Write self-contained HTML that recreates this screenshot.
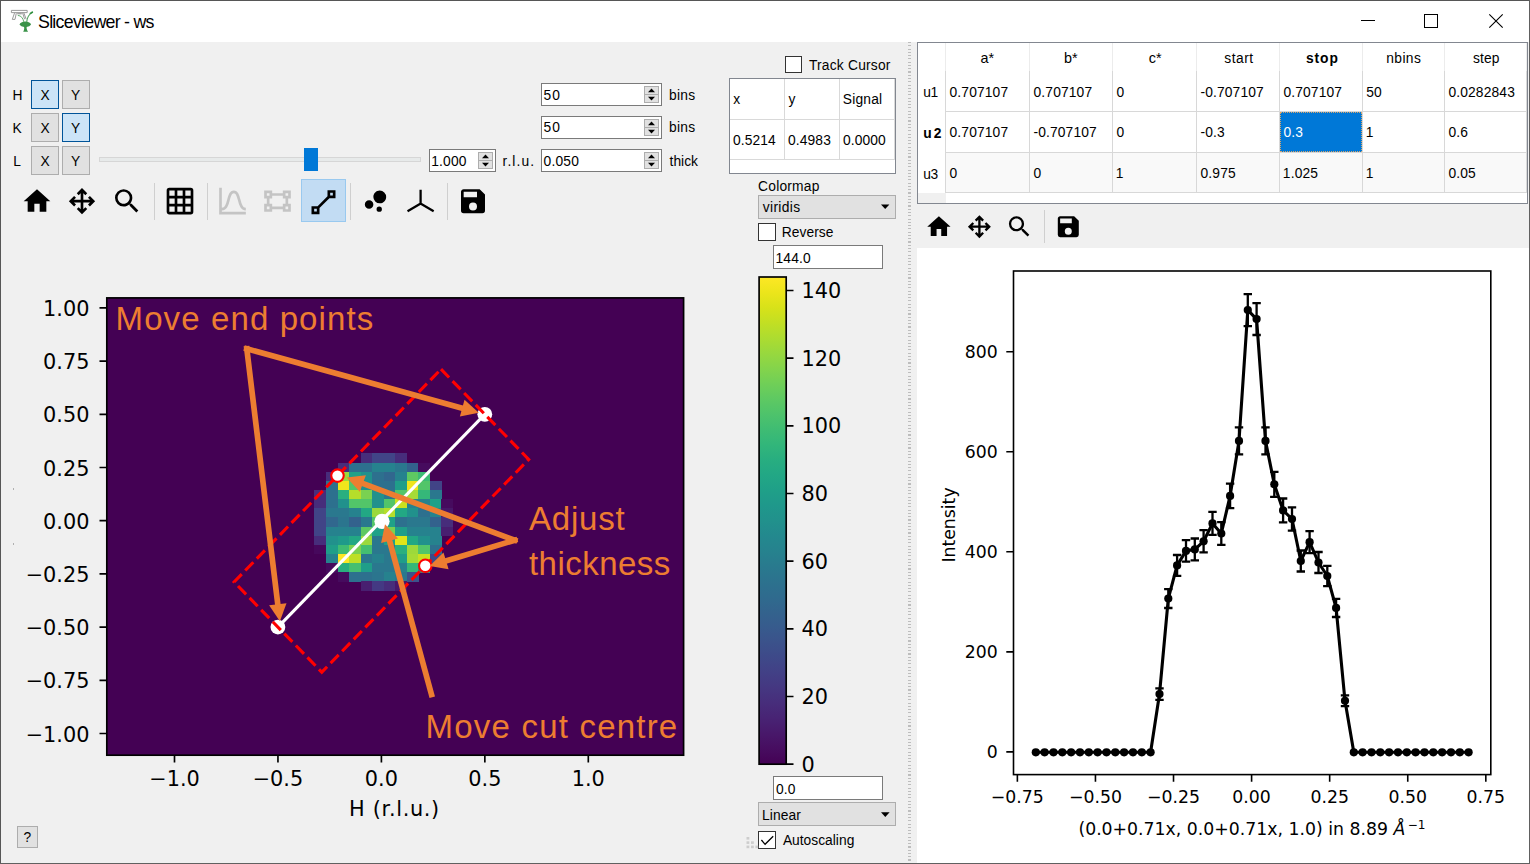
<!DOCTYPE html>
<html lang="en"><head><meta charset="utf-8"><title>Sliceviewer - ws</title>
<style>
html,body{margin:0;padding:0;background:#f0f0f0;}
body{width:1530px;height:864px;overflow:hidden;position:relative;font-family:"Liberation Sans",Arial,sans-serif;font-size:13.8px;color:#000;}
#win{position:absolute;left:0;top:0;width:1530px;height:864px;overflow:hidden;background:#f0f0f0;}
#win div{position:absolute;box-sizing:border-box;}
svg{position:absolute;left:0;top:0;overflow:visible;}
text{white-space:pre;}
.btn{background:#e1e1e1;border:1px solid #adadad;}
.btn.on{background:#cce4f7;border:1px solid #005499;}
.edit{background:#fff;border:1px solid #7a7a7a;}
.chk{background:#fff;border:1px solid #333;}
.sep{background:#cfcfcf;width:1px;}
</style></head><body>
<div id="win">

<div id="titlebar" style="left:1px;top:1px;width:1528px;height:41px;background:#fff;"></div>
<div id="dims">
<div class="btn on" style="left:31px;top:80px;width:28px;height:29px;"></div>
<div class="btn" style="left:62px;top:80px;width:28px;height:29px;"></div>
<div class="btn" style="left:31px;top:113px;width:28px;height:29px;"></div>
<div class="btn on" style="left:62px;top:113px;width:28px;height:29px;"></div>
<div class="btn" style="left:31px;top:146px;width:28px;height:29px;"></div>
<div class="btn" style="left:62px;top:146px;width:28px;height:29px;"></div>
<div style="left:99px;top:157px;width:322px;height:5px;background:#e7eaea;border:1px solid #d6d6d6;"></div>
<div style="left:304px;top:148px;width:14px;height:23px;background:#0078d7;"></div>
<div class="edit" style="left:541px;top:83px;width:121px;height:23px;"></div><div style="left:644px;top:86px;width:15px;height:17px;background:#e1e1e1;border:1px solid #adadad;"></div>
<div class="edit" style="left:541px;top:116px;width:121px;height:23px;"></div><div style="left:644px;top:119px;width:15px;height:17px;background:#e1e1e1;border:1px solid #adadad;"></div>
<div class="edit" style="left:541px;top:149px;width:121px;height:23px;"></div><div style="left:644px;top:152px;width:15px;height:17px;background:#e1e1e1;border:1px solid #adadad;"></div>
<div class="edit" style="left:428.5px;top:149px;width:67.5px;height:23px;"></div><div style="left:478.0px;top:152px;width:15px;height:17px;background:#e1e1e1;border:1px solid #adadad;"></div>
</div>
<div id="toolbar">
<div style="left:301px;top:179px;width:45px;height:43px;background:#c2dcf3;border:1px solid #99c9ef;"></div>
<div class="sep" style="left:154px;top:183px;width:1px;height:37px;"></div>
<div class="sep" style="left:207px;top:183px;width:1px;height:37px;"></div>
<div class="sep" style="left:350px;top:183px;width:1px;height:37px;"></div>
<div class="sep" style="left:447px;top:183px;width:1px;height:37px;"></div>
</div>
<div id="cursorinfo">
<div class="chk" style="left:785px;top:56px;width:17px;height:17px;"></div>
<div style="left:729px;top:78px;width:167px;height:96px;background:#fff;border:1px solid #828790;"></div>
<div style="left:784px;top:79px;width:1px;height:81px;background:#d9d9d9;"></div>
<div style="left:839px;top:79px;width:1px;height:81px;background:#d9d9d9;"></div>
<div style="left:894px;top:79px;width:1px;height:81px;background:#d9d9d9;"></div>
<div style="left:730px;top:119px;width:165px;height:1px;background:#d9d9d9;"></div>
<div style="left:730px;top:159px;width:165px;height:1px;background:#d9d9d9;"></div>
</div>
<div id="colorbar">
<div class="btn" style="left:758px;top:195px;width:138px;height:24px;"></div>
<div class="chk" style="left:758px;top:223px;width:18px;height:18px;"></div>
<div class="edit" style="left:772.5px;top:245px;width:110.5px;height:24px;"></div>
<div class="edit" style="left:772.5px;top:776px;width:110.5px;height:24px;"></div>
<div class="btn" style="left:758px;top:802px;width:138px;height:24px;"></div>
<div class="chk" style="left:758px;top:831px;width:18px;height:18px;"></div>
</div>
<div class="btn" style="left:17px;top:826px;width:21px;height:22px;"></div>
<div style="left:13px;top:488px;width:1px;height:2px;background:#b0b0b0;"></div>
<div style="left:13px;top:543px;width:1px;height:2px;background:#b0b0b0;"></div>
<div id="splitter" style="left:908px;top:42px;width:3px;height:820px;background:repeating-linear-gradient(to bottom,#bdbdbd 0,#bdbdbd 1.1px,#f0f0f0 1.1px,#f0f0f0 3.27px);"></div>
<div id="cuttable">
<div style="left:917px;top:42px;width:611px;height:162px;background:#fff;border:1px solid #828790;"></div>
<div style="left:946px;top:153px;width:581px;height:39px;background:#f9f9f9;"></div>
<div style="left:1280px;top:112px;width:82px;height:40px;background:#0078d7;outline:1px dotted #d9a66b;outline-offset:-1px;"></div>
<div style="left:945px;top:43px;width:1px;height:28px;background:#ececec;"></div>
<div style="left:945px;top:71px;width:1px;height:122px;background:#d8d8d8;"></div>
<div style="left:1029px;top:43px;width:1px;height:28px;background:#ececec;"></div>
<div style="left:1029px;top:71px;width:1px;height:122px;background:#d8d8d8;"></div>
<div style="left:1112px;top:43px;width:1px;height:28px;background:#ececec;"></div>
<div style="left:1112px;top:71px;width:1px;height:122px;background:#d8d8d8;"></div>
<div style="left:1196px;top:43px;width:1px;height:28px;background:#ececec;"></div>
<div style="left:1196px;top:71px;width:1px;height:122px;background:#d8d8d8;"></div>
<div style="left:1279px;top:43px;width:1px;height:28px;background:#ececec;"></div>
<div style="left:1279px;top:71px;width:1px;height:122px;background:#d8d8d8;"></div>
<div style="left:1362px;top:43px;width:1px;height:28px;background:#ececec;"></div>
<div style="left:1362px;top:71px;width:1px;height:122px;background:#d8d8d8;"></div>
<div style="left:1444px;top:43px;width:1px;height:28px;background:#ececec;"></div>
<div style="left:1444px;top:71px;width:1px;height:122px;background:#d8d8d8;"></div>
<div style="left:1526px;top:43px;width:1px;height:28px;background:#ececec;"></div>
<div style="left:1526px;top:71px;width:1px;height:122px;background:#d8d8d8;"></div>
<div style="left:946px;top:111px;width:581px;height:1px;background:#d8d8d8;"></div>
<div style="left:946px;top:152px;width:581px;height:1px;background:#d8d8d8;"></div>
<div style="left:946px;top:192px;width:581px;height:1px;background:#d8d8d8;"></div>
<div style="left:918px;top:193px;width:28px;height:10px;background:#f0f0f0;"></div>
</div>
<div class="sep" style="left:1044px;top:210px;width:1px;height:33px;"></div>
<div id="cutplot" style="left:917px;top:248px;width:612px;height:615px;background:#fff;"></div>
<svg id="gfx" width="1530" height="864" viewBox="0 0 1530 864">
<g id="title">
<g id="logo" fill="none">
<path d="M11.4,10.4H27.2V12.6H11.4Z" stroke="#8e8e8e" stroke-width="0.9" fill="#fff"/>
<path d="M14.6,12.8L12.3,19.4H15L16.3,13.2M22.6,12.8L24.6,19.2M23.8,12.8L26.2,19.2" stroke="#8e8e8e" stroke-width="0.9"/>
<path d="M17.2,13.4H21.8" stroke="#a2a2a2" stroke-width="1.9"/>
<path d="M17.8,15.4C21.2,15.6 23,18.2 23.8,21.8" stroke="#5aa866" stroke-width="0.95"/>
<path d="M26.8,21.4C27.2,17.4 29.4,14.2 32.3,12.4" stroke="#4ba159" stroke-width="1.1" stroke-linecap="round"/>
<path d="M30.4,13.4L32.3,12.2" stroke="#2f8f3f" stroke-width="1.7" stroke-linecap="round"/>
<ellipse cx="25.3" cy="24.3" rx="5.5" ry="2.7" fill="#3a9349"/>
<path d="M23.6,26C24.6,27.4 24.4,29.6 23.2,31.8H28.1C26.6,29.6 26.2,27.4 27,26Z" fill="#3a9349"/>
</g>
<text x="38.00" y="27.70" font-family="&quot;Liberation Sans&quot;,Arial,sans-serif" font-size="17.8" fill="#000" letter-spacing="-0.733">Sliceviewer - ws</text>
<path d="M1361,20.5H1375" stroke="#000" stroke-width="1"/>
<rect x="1424.5" y="14.5" width="13" height="13" fill="none" stroke="#000" stroke-width="1"/>
<path d="M1489.3,14.3L1502.7,27.7M1502.7,14.3L1489.3,27.7" stroke="#000" stroke-width="1.1"/>
</g>
<g id="dimtext">
<text x="12.50" y="99.90" font-family="&quot;Liberation Sans&quot;,Arial,sans-serif" font-size="13.8" fill="#000">H</text>
<text x="40.38" y="99.90" font-family="&quot;Liberation Sans&quot;,Arial,sans-serif" font-size="13.8" fill="#000">X</text>
<text x="71.01" y="99.90" font-family="&quot;Liberation Sans&quot;,Arial,sans-serif" font-size="13.8" fill="#000">Y</text>
<text x="12.39" y="132.70" font-family="&quot;Liberation Sans&quot;,Arial,sans-serif" font-size="13.8" fill="#000">K</text>
<text x="40.38" y="132.70" font-family="&quot;Liberation Sans&quot;,Arial,sans-serif" font-size="13.8" fill="#000">X</text>
<text x="71.01" y="132.70" font-family="&quot;Liberation Sans&quot;,Arial,sans-serif" font-size="13.8" fill="#000">Y</text>
<text x="13.33" y="165.80" font-family="&quot;Liberation Sans&quot;,Arial,sans-serif" font-size="13.8" fill="#000">L</text>
<text x="40.38" y="165.80" font-family="&quot;Liberation Sans&quot;,Arial,sans-serif" font-size="13.8" fill="#000">X</text>
<text x="71.01" y="165.80" font-family="&quot;Liberation Sans&quot;,Arial,sans-serif" font-size="13.8" fill="#000">Y</text>
<path d="M648.0,92.3L651.5,88.5L655.0,92.3Z M648.0,96.7L651.5,100.5L655.0,96.7Z" fill="#000"/><path d="M644.5,94.5H658.5" stroke="#adadad" stroke-width="1"/>
<path d="M648.0,125.3L651.5,121.5L655.0,125.3Z M648.0,129.7L651.5,133.5L655.0,129.7Z" fill="#000"/><path d="M644.5,127.5H658.5" stroke="#adadad" stroke-width="1"/>
<path d="M648.0,158.3L651.5,154.5L655.0,158.3Z M648.0,162.7L651.5,166.5L655.0,162.7Z" fill="#000"/><path d="M644.5,160.5H658.5" stroke="#adadad" stroke-width="1"/>
<path d="M482.0,158.3L485.5,154.5L489.0,158.3Z M482.0,162.7L485.5,166.5L489.0,162.7Z" fill="#000"/><path d="M478.5,160.5H492.5" stroke="#adadad" stroke-width="1"/>
<text x="543.55" y="99.60" font-family="&quot;Liberation Sans&quot;,Arial,sans-serif" font-size="13.8" fill="#000" letter-spacing="0.917">50</text>
<text x="543.55" y="132.40" font-family="&quot;Liberation Sans&quot;,Arial,sans-serif" font-size="13.8" fill="#000" letter-spacing="0.917">50</text>
<text x="543.62" y="165.60" font-family="&quot;Liberation Sans&quot;,Arial,sans-serif" font-size="13.8" fill="#000" letter-spacing="0.166">0.050</text>
<text x="431.26" y="165.60" font-family="&quot;Liberation Sans&quot;,Arial,sans-serif" font-size="13.8" fill="#000" letter-spacing="0.179">1.000</text>
<text x="668.97" y="99.60" font-family="&quot;Liberation Sans&quot;,Arial,sans-serif" font-size="13.8" fill="#000" letter-spacing="0.329">bins</text>
<text x="668.97" y="132.40" font-family="&quot;Liberation Sans&quot;,Arial,sans-serif" font-size="13.8" fill="#000" letter-spacing="0.329">bins</text>
<text x="669.59" y="165.60" font-family="&quot;Liberation Sans&quot;,Arial,sans-serif" font-size="13.8" fill="#000" letter-spacing="-0.005">thick</text>
<text x="502.50" y="165.60" font-family="&quot;Liberation Sans&quot;,Arial,sans-serif" font-size="13.8" fill="#000" letter-spacing="1.091">r.l.u.</text>
</g>
<g id="tbicons">
<path transform="translate(21.00,185.20) scale(1.3333)" d="M10,20V14H14V20H19V12H22L12,3L2,12H5V20H10Z" fill="#000" fill-rule="evenodd"/>
<path transform="translate(66.00,185.20) scale(1.3333)" d="M13,11H18L16.5,9.5L17.92,8.08L21.84,12L17.92,15.92L16.5,14.5L18,13H13V18L14.5,16.5L15.92,17.92L12,21.84L8.08,17.92L9.5,16.5L11,18V13H6L7.5,14.5L6.08,15.92L2.16,12L6.08,8.08L7.5,9.5L6,11H11V6L9.5,7.5L8.08,6.08L12,2.16L15.92,6.08L14.5,7.5L13,6V11Z" fill="#000" fill-rule="evenodd"/>
<path transform="translate(111.00,185.20) scale(1.3333)" d="M9.5,3A6.5,6.5 0 0,1 16,9.5C16,11.11 15.41,12.59 14.44,13.73L14.71,14H15.5L20.5,19L19,20.5L14,15.5V14.71L13.73,14.44C12.59,15.41 11.11,16 9.5,16A6.5,6.5 0 0,1 3,9.5A6.5,6.5 0 0,1 9.5,3M9.5,5C7,5 5,7 5,9.5C5,12 7,14 9.5,14C12,14 14,12 14,9.5C14,7 12,5 9.5,5Z" fill="#000" fill-rule="evenodd"/>
<path transform="translate(164.00,185.20) scale(1.3333)" d="M10,4V8H14V4H10M16,4V8H20V4H16M16,10V14H20V10H16M16,16V20H20V16H16M14,20V16H10V20H14M8,20V16H4V20H8M8,14V10H4V14H8M8,8V4H4V8H8M10,14H14V10H10V14M4,2H20A2,2 0 0,1 22,4V20A2,2 0 0,1 20,22H4C2.92,22 2,21.1 2,20V4A2,2 0 0,1 4,2Z" fill="#000" fill-rule="evenodd"/>
<path transform="translate(216.50,185.20) scale(1.3333)" d="M9.96,11.31C10.82,8.1 11.5,6 13,6C14.5,6 15.18,8.1 16.04,11.31C17,14.92 18.1,19 22,19V17C19.8,17 19,14.54 17.97,10.8C17.08,7.46 16.15,4 13,4C9.85,4 8.92,7.46 8.03,10.8C7.03,14.54 6.2,17 4,17V2H2V22H22V20H4V19C7.9,19 9,14.92 9.96,11.31Z" fill="#c4c4c4" fill-rule="evenodd"/>
<path transform="translate(261.50,185.20) scale(1.3333)" d="M2,4H8V6H16V4H22V10H20V14H22V20H16V18H8V20H2V14H4V10H2V4M16,10V8H8V10H6V14H8V16H16V14H18V10H16M4,6V8H6V6H4M18,6V8H20V6H18M4,16V18H6V16H4M18,16V18H20V16H18Z" fill="#c4c4c4" fill-rule="evenodd"/>
<path transform="translate(307.50,186.20) scale(1.3333)" d="M15,3V7.59L7.59,15H3V21H9V16.42L16.42,9H21V3M17,5H19V7H17M5,17H7V19H5" fill="#000" fill-rule="evenodd"/>
<path transform="translate(359.50,185.20) scale(1.3333)" d="M7.2,11.2C8.97,11.2 10.4,12.63 10.4,14.4C10.4,16.17 8.97,17.6 7.2,17.6C5.43,17.6 4,16.17 4,14.4C4,12.63 5.43,11.2 7.2,11.2M14.8,16A2,2 0 0,1 16.8,18A2,2 0 0,1 14.8,20A2,2 0 0,1 12.8,18A2,2 0 0,1 14.8,16M15.2,4A4.8,4.8 0 0,1 20,8.8C20,11.45 17.85,13.6 15.2,13.6A4.8,4.8 0 0,1 10.4,8.8C10.4,6.15 12.55,4 15.2,4Z" fill="#000" fill-rule="evenodd"/>
<g transform="translate(404.60,185.20) scale(1.3333)" stroke="#000" stroke-width="1.7" fill="none" stroke-linecap="butt"><path d="M12,3.4V14.2M12.4,13.6L2.2,19.5M11.6,13.6L21.8,19.5"/></g>
<path transform="translate(457.00,185.20) scale(1.3333)" d="M15,9H5V5H15M12,19A3,3 0 0,1 9,16A3,3 0 0,1 12,13A3,3 0 0,1 15,16A3,3 0 0,1 12,19M17,3H5C3.89,3 3,3.9 3,5V19A2,2 0 0,0 5,21H19A2,2 0 0,0 21,19V7L17,3Z" fill="#000" fill-rule="evenodd"/>
</g>
<g id="cursortext">
<text x="808.92" y="69.90" font-family="&quot;Liberation Sans&quot;,Arial,sans-serif" font-size="13.8" fill="#000" letter-spacing="0.209">Track Cursor</text>
<text x="733.26" y="103.90" font-family="&quot;Liberation Sans&quot;,Arial,sans-serif" font-size="13.8" fill="#000">x</text>
<text x="788.50" y="103.90" font-family="&quot;Liberation Sans&quot;,Arial,sans-serif" font-size="13.8" fill="#000">y</text>
<text x="842.78" y="103.90" font-family="&quot;Liberation Sans&quot;,Arial,sans-serif" font-size="13.8" fill="#000" letter-spacing="0.197">Signal</text>
<text x="733.02" y="144.80" font-family="&quot;Liberation Sans&quot;,Arial,sans-serif" font-size="13.8" fill="#000" letter-spacing="0.100">0.5214</text>
<text x="788.02" y="144.80" font-family="&quot;Liberation Sans&quot;,Arial,sans-serif" font-size="13.8" fill="#000" letter-spacing="0.121">0.4983</text>
<text x="842.92" y="144.80" font-family="&quot;Liberation Sans&quot;,Arial,sans-serif" font-size="13.8" fill="#000" letter-spacing="0.108">0.0000</text>
</g>
<g id="cbtext">
<text x="758.11" y="190.80" font-family="&quot;Liberation Sans&quot;,Arial,sans-serif" font-size="13.8" fill="#000" letter-spacing="0.203">Colormap</text>
<text x="762.80" y="211.50" font-family="&quot;Liberation Sans&quot;,Arial,sans-serif" font-size="13.8" fill="#000" letter-spacing="0.337">viridis</text>
<path d="M881,204.4H889.4L885.2,209Z" fill="#000"/>
<text x="781.70" y="237.00" font-family="&quot;Liberation Sans&quot;,Arial,sans-serif" font-size="13.8" fill="#000" letter-spacing="0.075">Reverse</text>
<text x="775.47" y="262.50" font-family="&quot;Liberation Sans&quot;,Arial,sans-serif" font-size="13.8" fill="#000" letter-spacing="0.180">144.0</text>
<text x="775.92" y="793.50" font-family="&quot;Liberation Sans&quot;,Arial,sans-serif" font-size="13.8" fill="#000" letter-spacing="0.142">0.0</text>
<text x="762.10" y="820.00" font-family="&quot;Liberation Sans&quot;,Arial,sans-serif" font-size="13.8" fill="#000" letter-spacing="0.089">Linear</text>
<path d="M881,812.2H889.6L885.3,817Z" fill="#000"/>
<text x="782.90" y="845.10" font-family="&quot;Liberation Sans&quot;,Arial,sans-serif" font-size="13.8" fill="#000" letter-spacing="0.008">Autoscaling</text>
<path d="M761.4,840L765.1,844.3L773.2,836.2" stroke="#000" stroke-width="1.3" fill="none"/>
<text x="23.44" y="842.00" font-family="&quot;Liberation Sans&quot;,Arial,sans-serif" font-size="13.8" fill="#000">?</text>
<g fill="#cdcdcd"><rect x="746.5" y="837" width="2.8" height="2.6"/><rect x="746.5" y="841.3" width="2.8" height="2.6"/><rect x="751" y="841.3" width="2.8" height="2.6"/><rect x="746.5" y="845.6" width="2.8" height="2.6"/><rect x="751" y="845.6" width="2.8" height="2.6"/><rect x="755.4" y="845.6" width="2.8" height="2.6"/></g>
</g>
<g id="mainplot">
<rect x="106.8" y="297.9" width="576.80" height="457.30" fill="#440154"/>
<g id="heat" shape-rendering="crispEdges">
<rect x="360.59" y="453.38" width="11.84" height="9.45" fill="#472d7b"/>
<rect x="372.13" y="453.38" width="11.84" height="9.45" fill="#414487"/>
<rect x="383.66" y="453.38" width="11.84" height="9.45" fill="#414487"/>
<rect x="395.20" y="453.38" width="11.84" height="9.45" fill="#472d7b"/>
<rect x="337.52" y="462.53" width="11.84" height="9.45" fill="#472d7b"/>
<rect x="349.06" y="462.53" width="11.84" height="9.45" fill="#2d708e"/>
<rect x="360.59" y="462.53" width="11.84" height="9.45" fill="#2d708e"/>
<rect x="372.13" y="462.53" width="11.84" height="9.45" fill="#26828e"/>
<rect x="383.66" y="462.53" width="11.84" height="9.45" fill="#26828e"/>
<rect x="395.20" y="462.53" width="11.84" height="9.45" fill="#2a788e"/>
<rect x="406.74" y="462.53" width="11.84" height="9.45" fill="#33628d"/>
<rect x="418.27" y="462.53" width="11.84" height="9.45" fill="#460b5e"/>
<rect x="325.98" y="471.67" width="11.84" height="9.45" fill="#472d7b"/>
<rect x="337.52" y="471.67" width="11.84" height="9.45" fill="#9bd93c"/>
<rect x="349.06" y="471.67" width="11.84" height="9.45" fill="#1fa188"/>
<rect x="360.59" y="471.67" width="11.84" height="9.45" fill="#21918c"/>
<rect x="372.13" y="471.67" width="11.84" height="9.45" fill="#2d708e"/>
<rect x="383.66" y="471.67" width="11.84" height="9.45" fill="#31678e"/>
<rect x="395.20" y="471.67" width="11.84" height="9.45" fill="#26828e"/>
<rect x="406.74" y="471.67" width="11.84" height="9.45" fill="#5ec962"/>
<rect x="418.27" y="471.67" width="11.84" height="9.45" fill="#3dbc74"/>
<rect x="325.98" y="480.82" width="11.84" height="9.45" fill="#2d708e"/>
<rect x="337.52" y="480.82" width="11.84" height="9.45" fill="#efe51c"/>
<rect x="349.06" y="480.82" width="11.84" height="9.45" fill="#52c569"/>
<rect x="360.59" y="480.82" width="11.84" height="9.45" fill="#21918c"/>
<rect x="372.13" y="480.82" width="11.84" height="9.45" fill="#2d708e"/>
<rect x="383.66" y="480.82" width="11.84" height="9.45" fill="#2d708e"/>
<rect x="395.20" y="480.82" width="11.84" height="9.45" fill="#1f9e89"/>
<rect x="406.74" y="480.82" width="11.84" height="9.45" fill="#efe51c"/>
<rect x="418.27" y="480.82" width="11.84" height="9.45" fill="#52c569"/>
<rect x="429.81" y="480.82" width="11.84" height="9.45" fill="#414487"/>
<rect x="314.45" y="489.97" width="11.84" height="9.45" fill="#472d7b"/>
<rect x="325.98" y="489.97" width="11.84" height="9.45" fill="#2d708e"/>
<rect x="337.52" y="489.97" width="11.84" height="9.45" fill="#29af7f"/>
<rect x="349.06" y="489.97" width="11.84" height="9.45" fill="#b5de2b"/>
<rect x="360.59" y="489.97" width="11.84" height="9.45" fill="#7ad151"/>
<rect x="372.13" y="489.97" width="11.84" height="9.45" fill="#21918c"/>
<rect x="383.66" y="489.97" width="11.84" height="9.45" fill="#2a788e"/>
<rect x="395.20" y="489.97" width="11.84" height="9.45" fill="#52c569"/>
<rect x="406.74" y="489.97" width="11.84" height="9.45" fill="#a5db36"/>
<rect x="418.27" y="489.97" width="11.84" height="9.45" fill="#35b779"/>
<rect x="429.81" y="489.97" width="11.84" height="9.45" fill="#2a788e"/>
<rect x="314.45" y="499.11" width="11.84" height="9.45" fill="#472d7b"/>
<rect x="325.98" y="499.11" width="11.84" height="9.45" fill="#2d708e"/>
<rect x="337.52" y="499.11" width="11.84" height="9.45" fill="#21918c"/>
<rect x="349.06" y="499.11" width="11.84" height="9.45" fill="#52c569"/>
<rect x="360.59" y="499.11" width="11.84" height="9.45" fill="#52c569"/>
<rect x="372.13" y="499.11" width="11.84" height="9.45" fill="#21918c"/>
<rect x="383.66" y="499.11" width="11.84" height="9.45" fill="#52c569"/>
<rect x="395.20" y="499.11" width="11.84" height="9.45" fill="#cae11f"/>
<rect x="406.74" y="499.11" width="11.84" height="9.45" fill="#26828e"/>
<rect x="418.27" y="499.11" width="11.84" height="9.45" fill="#26828e"/>
<rect x="429.81" y="499.11" width="11.84" height="9.45" fill="#1fa188"/>
<rect x="441.34" y="499.11" width="11.84" height="9.45" fill="#460b5e"/>
<rect x="314.45" y="508.26" width="11.84" height="9.45" fill="#414487"/>
<rect x="325.98" y="508.26" width="11.84" height="9.45" fill="#2a788e"/>
<rect x="337.52" y="508.26" width="11.84" height="9.45" fill="#2a788e"/>
<rect x="349.06" y="508.26" width="11.84" height="9.45" fill="#26828e"/>
<rect x="360.59" y="508.26" width="11.84" height="9.45" fill="#22a884"/>
<rect x="372.13" y="508.26" width="11.84" height="9.45" fill="#9bd93c"/>
<rect x="383.66" y="508.26" width="11.84" height="9.45" fill="#b5de2b"/>
<rect x="395.20" y="508.26" width="11.84" height="9.45" fill="#22a884"/>
<rect x="406.74" y="508.26" width="11.84" height="9.45" fill="#21918c"/>
<rect x="418.27" y="508.26" width="11.84" height="9.45" fill="#2d708e"/>
<rect x="429.81" y="508.26" width="11.84" height="9.45" fill="#26828e"/>
<rect x="441.34" y="508.26" width="11.84" height="9.45" fill="#481769"/>
<rect x="314.45" y="517.40" width="11.84" height="9.45" fill="#414487"/>
<rect x="325.98" y="517.40" width="11.84" height="9.45" fill="#31678e"/>
<rect x="337.52" y="517.40" width="11.84" height="9.45" fill="#2b758e"/>
<rect x="349.06" y="517.40" width="11.84" height="9.45" fill="#33628d"/>
<rect x="360.59" y="517.40" width="11.84" height="9.45" fill="#2a788e"/>
<rect x="372.13" y="517.40" width="11.84" height="9.45" fill="#52c569"/>
<rect x="383.66" y="517.40" width="11.84" height="9.45" fill="#1fa188"/>
<rect x="395.20" y="517.40" width="11.84" height="9.45" fill="#2d708e"/>
<rect x="406.74" y="517.40" width="11.84" height="9.45" fill="#2a788e"/>
<rect x="418.27" y="517.40" width="11.84" height="9.45" fill="#2a788e"/>
<rect x="429.81" y="517.40" width="11.84" height="9.45" fill="#33628d"/>
<rect x="441.34" y="517.40" width="11.84" height="9.45" fill="#472d7b"/>
<rect x="314.45" y="526.55" width="11.84" height="9.45" fill="#414487"/>
<rect x="325.98" y="526.55" width="11.84" height="9.45" fill="#26828e"/>
<rect x="337.52" y="526.55" width="11.84" height="9.45" fill="#26828e"/>
<rect x="349.06" y="526.55" width="11.84" height="9.45" fill="#26828e"/>
<rect x="360.59" y="526.55" width="11.84" height="9.45" fill="#5ec962"/>
<rect x="372.13" y="526.55" width="11.84" height="9.45" fill="#1fa188"/>
<rect x="383.66" y="526.55" width="11.84" height="9.45" fill="#7ad151"/>
<rect x="395.20" y="526.55" width="11.84" height="9.45" fill="#1f9e89"/>
<rect x="406.74" y="526.55" width="11.84" height="9.45" fill="#26828e"/>
<rect x="418.27" y="526.55" width="11.84" height="9.45" fill="#26828e"/>
<rect x="429.81" y="526.55" width="11.84" height="9.45" fill="#26828e"/>
<rect x="441.34" y="526.55" width="11.84" height="9.45" fill="#481f70"/>
<rect x="314.45" y="535.70" width="11.84" height="9.45" fill="#472d7b"/>
<rect x="325.98" y="535.70" width="11.84" height="9.45" fill="#21918c"/>
<rect x="337.52" y="535.70" width="11.84" height="9.45" fill="#1f9a8a"/>
<rect x="349.06" y="535.70" width="11.84" height="9.45" fill="#22a884"/>
<rect x="360.59" y="535.70" width="11.84" height="9.45" fill="#9bd93c"/>
<rect x="372.13" y="535.70" width="11.84" height="9.45" fill="#2a788e"/>
<rect x="383.66" y="535.70" width="11.84" height="9.45" fill="#1fa188"/>
<rect x="395.20" y="535.70" width="11.84" height="9.45" fill="#e2e418"/>
<rect x="406.74" y="535.70" width="11.84" height="9.45" fill="#22a884"/>
<rect x="418.27" y="535.70" width="11.84" height="9.45" fill="#21918c"/>
<rect x="429.81" y="535.70" width="11.84" height="9.45" fill="#26828e"/>
<rect x="314.45" y="544.84" width="11.84" height="9.45" fill="#46085c"/>
<rect x="325.98" y="544.84" width="11.84" height="9.45" fill="#1f9e89"/>
<rect x="337.52" y="544.84" width="11.84" height="9.45" fill="#3fbc73"/>
<rect x="349.06" y="544.84" width="11.84" height="9.45" fill="#7ad151"/>
<rect x="360.59" y="544.84" width="11.84" height="9.45" fill="#44bf70"/>
<rect x="372.13" y="544.84" width="11.84" height="9.45" fill="#2a788e"/>
<rect x="383.66" y="544.84" width="11.84" height="9.45" fill="#2a788e"/>
<rect x="395.20" y="544.84" width="11.84" height="9.45" fill="#29af7f"/>
<rect x="406.74" y="544.84" width="11.84" height="9.45" fill="#9dd93b"/>
<rect x="418.27" y="544.84" width="11.84" height="9.45" fill="#52c569"/>
<rect x="429.81" y="544.84" width="11.84" height="9.45" fill="#2d708e"/>
<rect x="325.98" y="553.99" width="11.84" height="9.45" fill="#26828e"/>
<rect x="337.52" y="553.99" width="11.84" height="9.45" fill="#fde725"/>
<rect x="349.06" y="553.99" width="11.84" height="9.45" fill="#bddf26"/>
<rect x="360.59" y="553.99" width="11.84" height="9.45" fill="#2a788e"/>
<rect x="372.13" y="553.99" width="11.84" height="9.45" fill="#26828e"/>
<rect x="383.66" y="553.99" width="11.84" height="9.45" fill="#2a788e"/>
<rect x="395.20" y="553.99" width="11.84" height="9.45" fill="#1f9e89"/>
<rect x="406.74" y="553.99" width="11.84" height="9.45" fill="#a5db36"/>
<rect x="418.27" y="553.99" width="11.84" height="9.45" fill="#cae11f"/>
<rect x="429.81" y="553.99" width="11.84" height="9.45" fill="#3e4989"/>
<rect x="325.98" y="563.13" width="11.84" height="9.45" fill="#460a5d"/>
<rect x="337.52" y="563.13" width="11.84" height="9.45" fill="#29af7f"/>
<rect x="349.06" y="563.13" width="11.84" height="9.45" fill="#44bf70"/>
<rect x="360.59" y="563.13" width="11.84" height="9.45" fill="#1f9e89"/>
<rect x="372.13" y="563.13" width="11.84" height="9.45" fill="#2a788e"/>
<rect x="383.66" y="563.13" width="11.84" height="9.45" fill="#2a788e"/>
<rect x="395.20" y="563.13" width="11.84" height="9.45" fill="#26828e"/>
<rect x="406.74" y="563.13" width="11.84" height="9.45" fill="#35b779"/>
<rect x="418.27" y="563.13" width="11.84" height="9.45" fill="#21918c"/>
<rect x="337.52" y="572.28" width="11.84" height="9.45" fill="#460b5e"/>
<rect x="349.06" y="572.28" width="11.84" height="9.45" fill="#2d708e"/>
<rect x="360.59" y="572.28" width="11.84" height="9.45" fill="#2d708e"/>
<rect x="372.13" y="572.28" width="11.84" height="9.45" fill="#2b758e"/>
<rect x="383.66" y="572.28" width="11.84" height="9.45" fill="#26828e"/>
<rect x="395.20" y="572.28" width="11.84" height="9.45" fill="#2a788e"/>
<rect x="406.74" y="572.28" width="11.84" height="9.45" fill="#3b528b"/>
<rect x="360.59" y="581.43" width="11.84" height="9.45" fill="#481f70"/>
<rect x="372.13" y="581.43" width="11.84" height="9.45" fill="#443983"/>
<rect x="383.66" y="581.43" width="11.84" height="9.45" fill="#472d7b"/>
<rect x="395.20" y="581.43" width="11.84" height="9.45" fill="#481769"/>
</g>
<path d="M277.9,627.1L484.8,414.3" stroke="#fff" stroke-width="3.1"/>
<circle cx="484.8" cy="414.3" r="7.4" fill="#fff"/>
<circle cx="277.9" cy="627.1" r="7.4" fill="#fff"/>
<circle cx="382.0" cy="521.3" r="7.6" fill="#fff"/>
<polygon points="441.0,369.2 528.7,459.4 321.8,672.2 234.1,582.0" fill="none" stroke="#ff0000" stroke-width="3.1" stroke-dasharray="11.6 5"/>
<circle cx="337.5" cy="475.6" r="6.25" fill="#fff" stroke="#ff0000" stroke-width="2.1"/>
<circle cx="425.3" cy="565.8" r="6.25" fill="#fff" stroke="#ff0000" stroke-width="2.1"/>
<g id="annot">
<path d="M246.8,348.8L463.2,408.4" stroke="#ed7d31" stroke-width="5.7" stroke-linecap="square"/><polygon points="478.8,412.7 459.9,416.6 464.5,399.7" fill="#ed7d31"/>
<path d="M246.8,348.8L277.9,605.2" stroke="#ed7d31" stroke-width="5.7" stroke-linecap="square"/><polygon points="279.9,621.3 269.1,605.3 286.5,603.2" fill="#ed7d31"/>
<path d="M514.7,540.2L361.9,483.2" stroke="#ed7d31" stroke-width="5.7" stroke-linecap="square"/><polygon points="346.7,477.5 365.9,475.3 359.8,491.7" fill="#ed7d31"/>
<path d="M514.7,540.2L445.1,561.2" stroke="#ed7d31" stroke-width="5.7" stroke-linecap="square"/><polygon points="429.6,565.9 443.5,552.6 448.6,569.3" fill="#ed7d31"/>
<path d="M431.5,694.5L389.3,539.8" stroke="#ed7d31" stroke-width="5.7" stroke-linecap="square"/><polygon points="385.0,524.2 398.0,538.5 381.1,543.1" fill="#ed7d31"/>
<text x="115.56" y="329.80" font-family="&quot;Liberation Sans&quot;,Arial,sans-serif" font-size="33" fill="#ed7d31" letter-spacing="1.112">Move end points</text>
<text x="528.90" y="530.40" font-family="&quot;Liberation Sans&quot;,Arial,sans-serif" font-size="33" fill="#ed7d31" letter-spacing="0.825">Adjust</text>
<text x="529.00" y="574.70" font-family="&quot;Liberation Sans&quot;,Arial,sans-serif" font-size="33" fill="#ed7d31" letter-spacing="0.455">thickness</text>
<text x="425.56" y="737.70" font-family="&quot;Liberation Sans&quot;,Arial,sans-serif" font-size="33" fill="#ed7d31" letter-spacing="1.205">Move cut centre</text>
</g>
<rect x="106.8" y="297.9" width="576.80" height="457.30" fill="none" stroke="#000" stroke-width="1.67"/>
<path d="M174.50,755.2v7.3M277.95,755.2v7.3M381.40,755.2v7.3M484.85,755.2v7.3M588.30,755.2v7.3M106.8,307.90h-7.3M106.8,361.10h-7.3M106.8,414.30h-7.3M106.8,467.50h-7.3M106.8,520.70h-7.3M106.8,573.90h-7.3M106.8,627.10h-7.3M106.8,680.30h-7.3M106.8,733.50h-7.3" stroke="#000" stroke-width="1.67"/>
<text x="149.21" y="785.5" font-family="&quot;DejaVu Sans&quot;,&quot;Liberation Sans&quot;,sans-serif" font-size="20.83">−1.0</text>
<text x="252.66" y="785.5" font-family="&quot;DejaVu Sans&quot;,&quot;Liberation Sans&quot;,sans-serif" font-size="20.83">−0.5</text>
<text x="364.84" y="785.5" font-family="&quot;DejaVu Sans&quot;,&quot;Liberation Sans&quot;,sans-serif" font-size="20.83">0.0</text>
<text x="468.29" y="785.5" font-family="&quot;DejaVu Sans&quot;,&quot;Liberation Sans&quot;,sans-serif" font-size="20.83">0.5</text>
<text x="571.74" y="785.5" font-family="&quot;DejaVu Sans&quot;,&quot;Liberation Sans&quot;,sans-serif" font-size="20.83">1.0</text>
<text x="43.12" y="315.90" font-family="&quot;DejaVu Sans&quot;,&quot;Liberation Sans&quot;,sans-serif" font-size="20.83">1.00</text>
<text x="43.12" y="369.10" font-family="&quot;DejaVu Sans&quot;,&quot;Liberation Sans&quot;,sans-serif" font-size="20.83">0.75</text>
<text x="43.12" y="422.30" font-family="&quot;DejaVu Sans&quot;,&quot;Liberation Sans&quot;,sans-serif" font-size="20.83">0.50</text>
<text x="43.12" y="475.50" font-family="&quot;DejaVu Sans&quot;,&quot;Liberation Sans&quot;,sans-serif" font-size="20.83">0.25</text>
<text x="43.12" y="528.70" font-family="&quot;DejaVu Sans&quot;,&quot;Liberation Sans&quot;,sans-serif" font-size="20.83">0.00</text>
<text x="25.67" y="581.90" font-family="&quot;DejaVu Sans&quot;,&quot;Liberation Sans&quot;,sans-serif" font-size="20.83">−0.25</text>
<text x="25.67" y="635.10" font-family="&quot;DejaVu Sans&quot;,&quot;Liberation Sans&quot;,sans-serif" font-size="20.83">−0.50</text>
<text x="25.67" y="688.30" font-family="&quot;DejaVu Sans&quot;,&quot;Liberation Sans&quot;,sans-serif" font-size="20.83">−0.75</text>
<text x="25.67" y="741.50" font-family="&quot;DejaVu Sans&quot;,&quot;Liberation Sans&quot;,sans-serif" font-size="20.83">−1.00</text>
<text x="349.12" y="816.40" font-family="&quot;DejaVu Sans&quot;,&quot;Liberation Sans&quot;,sans-serif" font-size="20.83" fill="#000" letter-spacing="0.678">H (r.l.u.)</text>
</g>
<defs><linearGradient id="vg" x1="0" y1="1" x2="0" y2="0"><stop offset="0.0000" stop-color="#440154"/><stop offset="0.0312" stop-color="#470d60"/><stop offset="0.0625" stop-color="#48186a"/><stop offset="0.0938" stop-color="#482374"/><stop offset="0.1250" stop-color="#472d7b"/><stop offset="0.1562" stop-color="#453781"/><stop offset="0.1875" stop-color="#424086"/><stop offset="0.2188" stop-color="#3e4989"/><stop offset="0.2500" stop-color="#3b528b"/><stop offset="0.2812" stop-color="#375b8d"/><stop offset="0.3125" stop-color="#33638d"/><stop offset="0.3438" stop-color="#2f6b8e"/><stop offset="0.3750" stop-color="#2c728e"/><stop offset="0.4062" stop-color="#297a8e"/><stop offset="0.4375" stop-color="#26828e"/><stop offset="0.4688" stop-color="#23898e"/><stop offset="0.5000" stop-color="#21918c"/><stop offset="0.5312" stop-color="#1f988b"/><stop offset="0.5625" stop-color="#1fa088"/><stop offset="0.5938" stop-color="#22a785"/><stop offset="0.6250" stop-color="#28ae80"/><stop offset="0.6562" stop-color="#32b67a"/><stop offset="0.6875" stop-color="#3fbc73"/><stop offset="0.7188" stop-color="#4ec36b"/><stop offset="0.7500" stop-color="#5ec962"/><stop offset="0.7812" stop-color="#70cf57"/><stop offset="0.8125" stop-color="#84d44b"/><stop offset="0.8438" stop-color="#98d83e"/><stop offset="0.8750" stop-color="#addc30"/><stop offset="0.9062" stop-color="#c2df23"/><stop offset="0.9375" stop-color="#d8e219"/><stop offset="0.9688" stop-color="#ece51b"/><stop offset="1.0000" stop-color="#fde725"/></linearGradient></defs>
<g id="cbar">
<rect x="759.1" y="277.0" width="27.10" height="487.20" fill="url(#vg)" stroke="#000" stroke-width="1.67"/>
<path d="M786.2,764.20h7.3M786.2,696.53h7.3M786.2,628.87h7.3M786.2,561.20h7.3M786.2,493.53h7.3M786.2,425.87h7.3M786.2,358.20h7.3M786.2,290.53h7.3" stroke="#000" stroke-width="1.67"/>
<text x="801.60" y="771.80" font-family="&quot;DejaVu Sans&quot;,&quot;Liberation Sans&quot;,sans-serif" font-size="20.83">0</text>
<text x="801.60" y="704.13" font-family="&quot;DejaVu Sans&quot;,&quot;Liberation Sans&quot;,sans-serif" font-size="20.83">20</text>
<text x="801.60" y="636.47" font-family="&quot;DejaVu Sans&quot;,&quot;Liberation Sans&quot;,sans-serif" font-size="20.83">40</text>
<text x="801.60" y="568.80" font-family="&quot;DejaVu Sans&quot;,&quot;Liberation Sans&quot;,sans-serif" font-size="20.83">60</text>
<text x="801.60" y="501.13" font-family="&quot;DejaVu Sans&quot;,&quot;Liberation Sans&quot;,sans-serif" font-size="20.83">80</text>
<text x="801.60" y="433.47" font-family="&quot;DejaVu Sans&quot;,&quot;Liberation Sans&quot;,sans-serif" font-size="20.83">100</text>
<text x="801.60" y="365.80" font-family="&quot;DejaVu Sans&quot;,&quot;Liberation Sans&quot;,sans-serif" font-size="20.83">120</text>
<text x="801.60" y="298.13" font-family="&quot;DejaVu Sans&quot;,&quot;Liberation Sans&quot;,sans-serif" font-size="20.83">140</text>
</g>
<g id="tabletext">
<text x="980.42" y="62.60" font-family="&quot;Liberation Sans&quot;,Arial,sans-serif" font-size="14.4" fill="#000">a*</text>
<text x="1063.92" y="62.60" font-family="&quot;Liberation Sans&quot;,Arial,sans-serif" font-size="14.4" fill="#000">b*</text>
<text x="1148.71" y="62.60" font-family="&quot;Liberation Sans&quot;,Arial,sans-serif" font-size="14.4" fill="#000">c*</text>
<text x="1224.25" y="62.60" font-family="&quot;Liberation Sans&quot;,Arial,sans-serif" font-size="13.8" fill="#000" letter-spacing="0.518">start</text>
<text x="1305.92" y="62.60" font-family="&quot;Liberation Sans&quot;,Arial,sans-serif" font-size="13.8" font-weight="bold" fill="#000" letter-spacing="0.939">stop</text>
<text x="1386.20" y="62.60" font-family="&quot;Liberation Sans&quot;,Arial,sans-serif" font-size="13.8" fill="#000" letter-spacing="0.425">nbins</text>
<text x="1472.95" y="62.60" font-family="&quot;Liberation Sans&quot;,Arial,sans-serif" font-size="13.8" fill="#000" letter-spacing="0.105">step</text>
<text x="923.37" y="97.00" font-family="&quot;Liberation Sans&quot;,Arial,sans-serif" font-size="13.8" fill="#000" letter-spacing="-0.469">u1</text>
<text x="923.37" y="138.20" font-family="&quot;Liberation Sans&quot;,Arial,sans-serif" font-size="13.8" font-weight="bold" fill="#000" letter-spacing="1.934">u2</text>
<text x="923.37" y="178.70" font-family="&quot;Liberation Sans&quot;,Arial,sans-serif" font-size="13.8" fill="#000" letter-spacing="-0.538">u3</text>
<text x="949.52" y="96.50" font-family="&quot;Liberation Sans&quot;,Arial,sans-serif" font-size="13.8" fill="#000" letter-spacing="0.151">0.707107</text>
<text x="1033.52" y="96.50" font-family="&quot;Liberation Sans&quot;,Arial,sans-serif" font-size="13.8" fill="#000" letter-spacing="0.151">0.707107</text>
<text x="1116.42" y="96.50" font-family="&quot;Liberation Sans&quot;,Arial,sans-serif" font-size="13.8" fill="#000">0</text>
<text x="1200.45" y="96.50" font-family="&quot;Liberation Sans&quot;,Arial,sans-serif" font-size="13.8" fill="#000" letter-spacing="0.143">-0.707107</text>
<text x="1283.42" y="96.50" font-family="&quot;Liberation Sans&quot;,Arial,sans-serif" font-size="13.8" fill="#000" letter-spacing="0.151">0.707107</text>
<text x="1366.15" y="96.50" font-family="&quot;Liberation Sans&quot;,Arial,sans-serif" font-size="13.8" fill="#000" letter-spacing="0.268">50</text>
<text x="1448.42" y="96.50" font-family="&quot;Liberation Sans&quot;,Arial,sans-serif" font-size="13.8" fill="#000" letter-spacing="0.151">0.0282843</text>
<text x="949.52" y="137.00" font-family="&quot;Liberation Sans&quot;,Arial,sans-serif" font-size="13.8" fill="#000" letter-spacing="0.151">0.707107</text>
<text x="1033.45" y="137.00" font-family="&quot;Liberation Sans&quot;,Arial,sans-serif" font-size="13.8" fill="#000" letter-spacing="0.143">-0.707107</text>
<text x="1116.42" y="137.00" font-family="&quot;Liberation Sans&quot;,Arial,sans-serif" font-size="13.8" fill="#000">0</text>
<text x="1200.45" y="137.00" font-family="&quot;Liberation Sans&quot;,Arial,sans-serif" font-size="13.8" fill="#000" letter-spacing="0.142">-0.3</text>
<text x="1283.42" y="137.00" font-family="&quot;Liberation Sans&quot;,Arial,sans-serif" font-size="13.8" fill="#fff" letter-spacing="0.170">0.3</text>
<text x="1365.66" y="137.00" font-family="&quot;Liberation Sans&quot;,Arial,sans-serif" font-size="13.8" fill="#000">1</text>
<text x="1448.42" y="137.00" font-family="&quot;Liberation Sans&quot;,Arial,sans-serif" font-size="13.8" fill="#000" letter-spacing="0.170">0.6</text>
<text x="949.52" y="177.70" font-family="&quot;Liberation Sans&quot;,Arial,sans-serif" font-size="13.8" fill="#000">0</text>
<text x="1033.52" y="177.70" font-family="&quot;Liberation Sans&quot;,Arial,sans-serif" font-size="13.8" fill="#000">0</text>
<text x="1115.87" y="177.70" font-family="&quot;Liberation Sans&quot;,Arial,sans-serif" font-size="13.8" fill="#000">1</text>
<text x="1200.52" y="177.70" font-family="&quot;Liberation Sans&quot;,Arial,sans-serif" font-size="13.8" fill="#000" letter-spacing="0.157">0.975</text>
<text x="1282.87" y="177.70" font-family="&quot;Liberation Sans&quot;,Arial,sans-serif" font-size="13.8" fill="#000" letter-spacing="0.155">1.025</text>
<text x="1365.66" y="177.70" font-family="&quot;Liberation Sans&quot;,Arial,sans-serif" font-size="13.8" fill="#000">1</text>
<text x="1448.42" y="177.70" font-family="&quot;Liberation Sans&quot;,Arial,sans-serif" font-size="13.8" fill="#000" letter-spacing="0.162">0.05</text>
</g>
<g id="tbicons2">
<path transform="translate(924.90,212.70) scale(1.1667)" d="M10,20V14H14V20H19V12H22L12,3L2,12H5V20H10Z" fill="#000" fill-rule="evenodd"/>
<path transform="translate(965.40,212.70) scale(1.1667)" d="M13,11H18L16.5,9.5L17.92,8.08L21.84,12L17.92,15.92L16.5,14.5L18,13H13V18L14.5,16.5L15.92,17.92L12,21.84L8.08,17.92L9.5,16.5L11,18V13H6L7.5,14.5L6.08,15.92L2.16,12L6.08,8.08L7.5,9.5L6,11H11V6L9.5,7.5L8.08,6.08L12,2.16L15.92,6.08L14.5,7.5L13,6V11Z" fill="#000" fill-rule="evenodd"/>
<path transform="translate(1005.40,212.70) scale(1.1667)" d="M9.5,3A6.5,6.5 0 0,1 16,9.5C16,11.11 15.41,12.59 14.44,13.73L14.71,14H15.5L20.5,19L19,20.5L14,15.5V14.71L13.73,14.44C12.59,15.41 11.11,16 9.5,16A6.5,6.5 0 0,1 3,9.5A6.5,6.5 0 0,1 9.5,3M9.5,5C7,5 5,7 5,9.5C5,12 7,14 9.5,14C12,14 14,12 14,9.5C14,7 12,5 9.5,5Z" fill="#000" fill-rule="evenodd"/>
<path transform="translate(1054.30,212.70) scale(1.1667)" d="M15,9H5V5H15M12,19A3,3 0 0,1 9,16A3,3 0 0,1 12,13A3,3 0 0,1 15,16A3,3 0 0,1 12,19M17,3H5C3.89,3 3,3.9 3,5V19A2,2 0 0,0 5,21H19A2,2 0 0,0 21,19V7L17,3Z" fill="#000" fill-rule="evenodd"/>
</g>
<g id="cutplotg">
<rect x="1013.5" y="271.0" width="477.30" height="503.60" fill="none" stroke="#000" stroke-width="1.6"/>
<path d="M1017.37,774.6v7.2M1095.45,774.6v7.2M1173.52,774.6v7.2M1251.60,774.6v7.2M1329.67,774.6v7.2M1407.75,774.6v7.2M1485.82,774.6v7.2M1013.5,751.90h-7.2M1013.5,651.86h-7.2M1013.5,551.82h-7.2M1013.5,451.78h-7.2M1013.5,351.74h-7.2" stroke="#000" stroke-width="1.6"/>
<text x="990.87" y="803.3" font-family="&quot;DejaVu Sans&quot;,&quot;Liberation Sans&quot;,sans-serif" font-size="17.3">−0.75</text>
<text x="1068.94" y="803.3" font-family="&quot;DejaVu Sans&quot;,&quot;Liberation Sans&quot;,sans-serif" font-size="17.3">−0.50</text>
<text x="1147.02" y="803.3" font-family="&quot;DejaVu Sans&quot;,&quot;Liberation Sans&quot;,sans-serif" font-size="17.3">−0.25</text>
<text x="1232.34" y="803.3" font-family="&quot;DejaVu Sans&quot;,&quot;Liberation Sans&quot;,sans-serif" font-size="17.3">0.00</text>
<text x="1310.41" y="803.3" font-family="&quot;DejaVu Sans&quot;,&quot;Liberation Sans&quot;,sans-serif" font-size="17.3">0.25</text>
<text x="1388.49" y="803.3" font-family="&quot;DejaVu Sans&quot;,&quot;Liberation Sans&quot;,sans-serif" font-size="17.3">0.50</text>
<text x="1466.56" y="803.3" font-family="&quot;DejaVu Sans&quot;,&quot;Liberation Sans&quot;,sans-serif" font-size="17.3">0.75</text>
<text x="986.79" y="758.40" font-family="&quot;DejaVu Sans&quot;,&quot;Liberation Sans&quot;,sans-serif" font-size="17.3">0</text>
<text x="964.78" y="658.36" font-family="&quot;DejaVu Sans&quot;,&quot;Liberation Sans&quot;,sans-serif" font-size="17.3">200</text>
<text x="964.78" y="558.32" font-family="&quot;DejaVu Sans&quot;,&quot;Liberation Sans&quot;,sans-serif" font-size="17.3">400</text>
<text x="964.78" y="458.28" font-family="&quot;DejaVu Sans&quot;,&quot;Liberation Sans&quot;,sans-serif" font-size="17.3">600</text>
<text x="964.78" y="358.24" font-family="&quot;DejaVu Sans&quot;,&quot;Liberation Sans&quot;,sans-serif" font-size="17.3">800</text>
<text transform="translate(955,525) rotate(-90)" text-anchor="middle" font-family="&quot;DejaVu Sans&quot;,&quot;Liberation Sans&quot;,sans-serif" font-size="17.3">Intensity</text>
<text x="1078.4" y="835.3" font-family="&quot;DejaVu Sans&quot;,&quot;Liberation Sans&quot;,sans-serif" font-size="17.3">(0.0+0.71x, 0.0+0.71x, 1.0) in 8.89 <tspan font-style="italic">Å</tspan><tspan font-size="12.11" dy="-6.6" dx="2.5">−1</tspan></text>
<path d="M1035.8,752.3L1044.6,752.3L1053.5,752.3L1062.3,752.3L1071.1,752.3L1080.0,752.3L1088.8,752.3L1097.6,752.3L1106.5,752.3L1115.3,752.3L1124.1,752.3L1133.0,752.3L1141.8,752.3L1150.6,752.3L1159.5,694.1L1168.3,598.6L1177.1,565.4L1186.0,550.9L1194.8,549.4L1203.6,541.3L1212.5,523.4L1221.3,533.5L1230.1,495.9L1239.0,440.9L1247.8,310.1L1256.6,319.1L1265.5,440.9L1274.3,484.3L1283.1,510.4L1292.0,519.0L1300.8,561.0L1309.6,542.2L1318.5,562.5L1327.3,576.0L1336.1,607.9L1345.0,700.8L1353.8,752.3L1362.6,752.3L1371.5,752.3L1380.3,752.3L1389.1,752.3L1398.0,752.3L1406.8,752.3L1415.6,752.3L1424.5,752.3L1433.3,752.3L1442.1,752.3L1451.0,752.3L1459.8,752.3L1468.6,752.3" fill="none" stroke="#000" stroke-width="3.1" stroke-linejoin="round"/>
<path d="M1159.5,688.3V699.9M1155.3,688.3h8.4M1155.3,699.9h8.4M1168.3,589.2V608.0M1164.1,589.2h8.4M1164.1,608.0h8.4M1177.1,555.0V575.8M1172.9,555.0h8.4M1172.9,575.8h8.4M1186.0,540.1V561.7M1181.8,540.1h8.4M1181.8,561.7h8.4M1194.8,538.5V560.3M1190.6,538.5h8.4M1190.6,560.3h8.4M1203.6,530.2V552.4M1199.4,530.2h8.4M1199.4,552.4h8.4M1212.5,511.9V534.9M1208.3,511.9h8.4M1208.3,534.9h8.4M1221.3,522.2V544.8M1217.1,522.2h8.4M1217.1,544.8h8.4M1230.1,483.7V508.1M1225.9,483.7h8.4M1225.9,508.1h8.4M1239.0,427.4V454.4M1234.8,427.4h8.4M1234.8,454.4h8.4M1247.8,294.1V326.1M1243.6,294.1h8.4M1243.6,326.1h8.4M1256.6,303.2V335.0M1252.4,303.2h8.4M1252.4,335.0h8.4M1265.5,427.4V454.4M1261.3,427.4h8.4M1261.3,454.4h8.4M1274.3,471.8V496.8M1270.1,471.8h8.4M1270.1,496.8h8.4M1283.1,498.5V522.3M1278.9,498.5h8.4M1278.9,522.3h8.4M1292.0,507.4V530.6M1287.8,507.4h8.4M1287.8,530.6h8.4M1300.8,550.5V571.5M1296.6,550.5h8.4M1296.6,571.5h8.4M1309.6,531.2V553.2M1305.4,531.2h8.4M1305.4,553.2h8.4M1318.5,552.0V573.0M1314.3,552.0h8.4M1314.3,573.0h8.4M1327.3,565.9V586.1M1323.1,565.9h8.4M1323.1,586.1h8.4M1336.1,598.8V617.0M1331.9,598.8h8.4M1331.9,617.0h8.4M1345.0,695.4V706.2M1340.8,695.4h8.4M1340.8,706.2h8.4" stroke="#000" stroke-width="2.3" fill="none"/>
<g fill="#000"><circle cx="1035.8" cy="752.3" r="4.1"/><circle cx="1044.6" cy="752.3" r="4.1"/><circle cx="1053.5" cy="752.3" r="4.1"/><circle cx="1062.3" cy="752.3" r="4.1"/><circle cx="1071.1" cy="752.3" r="4.1"/><circle cx="1080.0" cy="752.3" r="4.1"/><circle cx="1088.8" cy="752.3" r="4.1"/><circle cx="1097.6" cy="752.3" r="4.1"/><circle cx="1106.5" cy="752.3" r="4.1"/><circle cx="1115.3" cy="752.3" r="4.1"/><circle cx="1124.1" cy="752.3" r="4.1"/><circle cx="1133.0" cy="752.3" r="4.1"/><circle cx="1141.8" cy="752.3" r="4.1"/><circle cx="1150.6" cy="752.3" r="4.1"/><circle cx="1159.5" cy="694.1" r="4.1"/><circle cx="1168.3" cy="598.6" r="4.1"/><circle cx="1177.1" cy="565.4" r="4.1"/><circle cx="1186.0" cy="550.9" r="4.1"/><circle cx="1194.8" cy="549.4" r="4.1"/><circle cx="1203.6" cy="541.3" r="4.1"/><circle cx="1212.5" cy="523.4" r="4.1"/><circle cx="1221.3" cy="533.5" r="4.1"/><circle cx="1230.1" cy="495.9" r="4.1"/><circle cx="1239.0" cy="440.9" r="4.1"/><circle cx="1247.8" cy="310.1" r="4.1"/><circle cx="1256.6" cy="319.1" r="4.1"/><circle cx="1265.5" cy="440.9" r="4.1"/><circle cx="1274.3" cy="484.3" r="4.1"/><circle cx="1283.1" cy="510.4" r="4.1"/><circle cx="1292.0" cy="519.0" r="4.1"/><circle cx="1300.8" cy="561.0" r="4.1"/><circle cx="1309.6" cy="542.2" r="4.1"/><circle cx="1318.5" cy="562.5" r="4.1"/><circle cx="1327.3" cy="576.0" r="4.1"/><circle cx="1336.1" cy="607.9" r="4.1"/><circle cx="1345.0" cy="700.8" r="4.1"/><circle cx="1353.8" cy="752.3" r="4.1"/><circle cx="1362.6" cy="752.3" r="4.1"/><circle cx="1371.5" cy="752.3" r="4.1"/><circle cx="1380.3" cy="752.3" r="4.1"/><circle cx="1389.1" cy="752.3" r="4.1"/><circle cx="1398.0" cy="752.3" r="4.1"/><circle cx="1406.8" cy="752.3" r="4.1"/><circle cx="1415.6" cy="752.3" r="4.1"/><circle cx="1424.5" cy="752.3" r="4.1"/><circle cx="1433.3" cy="752.3" r="4.1"/><circle cx="1442.1" cy="752.3" r="4.1"/><circle cx="1451.0" cy="752.3" r="4.1"/><circle cx="1459.8" cy="752.3" r="4.1"/><circle cx="1468.6" cy="752.3" r="4.1"/></g>
</g>
</svg>
<div style="left:0;top:0;width:1530px;height:1px;background:#565656;"></div>
<div style="left:0;top:0;width:1px;height:864px;background:#565656;"></div>
<div style="left:1529px;top:0;width:1px;height:864px;background:#606060;"></div>
<div style="left:0;top:863px;width:1530px;height:1px;background:#606060;"></div>
</div></body></html>
